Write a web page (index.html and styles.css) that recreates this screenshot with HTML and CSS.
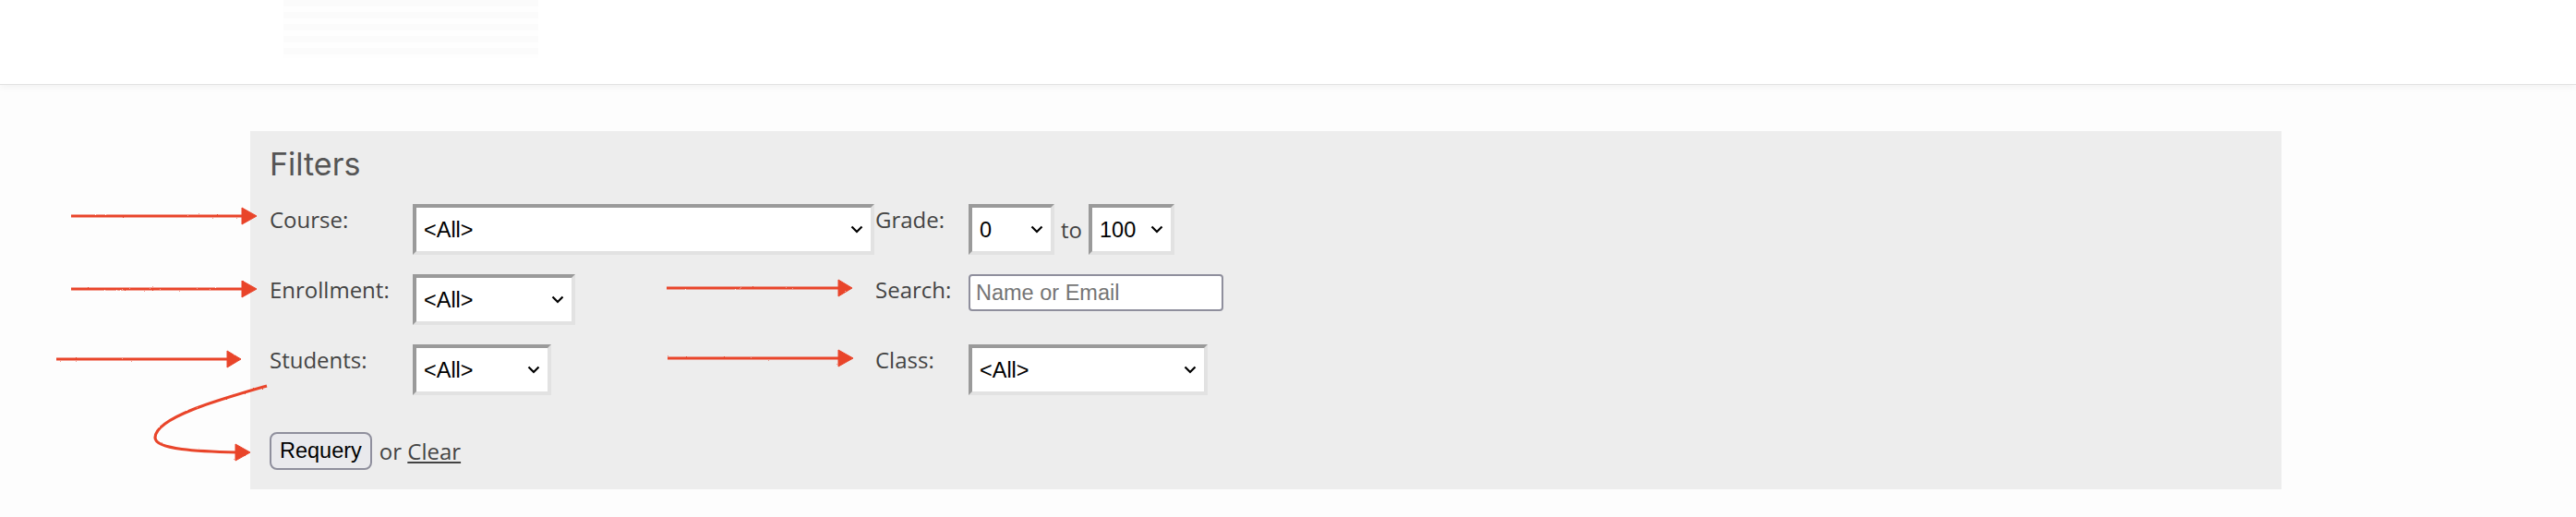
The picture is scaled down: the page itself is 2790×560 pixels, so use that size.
FILE: index.html
```html
<!DOCTYPE html>
<html lang="en">
  <head>
    <meta charset="UTF-8" />
    <meta name="viewport" content="width=device-width, initial-scale=1.0" />
    <title>Gradebook Filters</title>
    <link rel="stylesheet" href="styles.css">
  </head>

  <body>
    <header class="topbar">
      <div class="brand"></div>
    </header>

    <main class="content">
      <section class="filters">
        <h2>Filters</h2>

        <form class="filter-grid" id="filter-form">
          <label for="course">Course:</label>
          <select id="course" class="sel sel-course">
            <option>&lt;All&gt;</option>
          </select>
          <label for="grade-min">Grade:</label>
          <div class="grade-range">
            <select id="grade-min" class="sel sel-grade">
              <option>0</option>
            </select>
            <span>to</span>
            <select id="grade-max" class="sel sel-grade">
              <option>100</option>
            </select>
          </div>

          <label for="enrollment">Enrollment:</label>
          <select id="enrollment" class="sel sel-enroll">
            <option>&lt;All&gt;</option>
          </select>
          <label for="search">Search:</label>
          <input type="text" id="search" class="search" placeholder="Name or Email" />

          <label for="students">Students:</label>
          <select id="students" class="sel sel-students">
            <option>&lt;All&gt;</option>
          </select>
          <label for="class">Class:</label>
          <select id="class" class="sel sel-class">
            <option>&lt;All&gt;</option>
          </select>
        </form>

        <div class="actions">
          <button type="submit" form="filter-form">Requery</button>
          <span>or <a href="#">Clear</a></span>
        </div>
      </section>
    </main>

    <!-- hand-drawn pointers -->
    <svg class="marks" width="2790" height="560" viewBox="0 0 2790 560">
      <defs>
        <filter id="rough">
          <feTurbulence type="fractalNoise" baseFrequency="0.9" numOctaves="2" result="noise" />
          <feDisplacementMap in="SourceGraphic" in2="noise" scale="1.8" />
        </filter>
      </defs>
      <g filter="url(#rough)" stroke="#e9452c" fill="#e9452c">
        <line x1="77" y1="234" x2="264" y2="234" stroke-width="3.2" />
        <polygon points="262,225 278,234 262,243" stroke-width="1" />

        <line x1="77" y1="313" x2="264" y2="313" stroke-width="3.2" />
        <polygon points="262,304 278,313 262,322" stroke-width="1" />

        <line x1="61" y1="389" x2="248" y2="389" stroke-width="3.2" />
        <polygon points="246,380 261,389 246,398" stroke-width="1" />

        <line x1="722" y1="312" x2="910" y2="312" stroke-width="3.2" />
        <polygon points="908,303 923,312 908,321" stroke-width="1" />

        <line x1="723" y1="388" x2="910" y2="388" stroke-width="3.2" />
        <polygon points="908,379 924,388 908,397" stroke-width="1" />

        <path d="M289 418 C 240 432, 168 452, 168 474 C 168 487, 215 489, 258 490" fill="none" stroke-width="3.2" />
        <polygon points="255,481 271,490 255,499" stroke-width="1" />
      </g>
    </svg>
  </body>
</html>
```

FILE: styles.css
```css
body {
  margin: 0;
  background-color: #fdfdfd;
  font-family: "Open Sans", "Noto Sans", sans-serif;
  color: #444;
}

.topbar {
  height: 91px;
  padding-left: 307px;
  background-color: #fff;
  border-bottom: 1px solid #e2e2e2;
  box-shadow: 0 2px 8px rgba(0, 0, 0, 0.05);
}

/* washed-out logo strip */
.brand {
  width: 276px;
  height: 63px;
  background: repeating-linear-gradient(to bottom, #fbfbfb 0 7px, #fefefe 7px 13px);
}

.content {
  padding: 50px 0 0 271px;
}

.filters {
  width: 2200px;
  box-sizing: border-box;
  padding: 16px 21px 21px;
  background-color: #ededed;
}

.filters h2 {
  margin: 0;
  font-family: Inter, "Open Sans", sans-serif;
  font-weight: 400;
  font-size: 34px;
  line-height: 40px;
  color: #555;
}

.filter-grid {
  display: grid;
  grid-template-columns: 155px 501px 101px 1fr;
  row-gap: 21px;
  align-items: start;
  margin-top: 23px;
}

.filter-grid label {
  font-size: 24px;
  line-height: normal;
}

.sel {
  appearance: none;
  -webkit-appearance: none;
  box-sizing: border-box;
  height: 55px;
  padding: 0 30px 0 8px;
  border: 4px solid;
  border-color: #9a9a9a #e2e2e2 #e2e2e2 #9a9a9a;
  border-radius: 0;
  background: #fff url("data:image/svg+xml,<svg xmlns='http://www.w3.org/2000/svg' width='14' height='9' viewBox='0 0 14 9'><path d='M1.5 1.5l5.5 5.5 5.5-5.5' fill='none' stroke='%23000' stroke-width='2.2'/></svg>") no-repeat right 8px center;
  font-family: "Liberation Sans", Arial, sans-serif;
  font-size: 23.5px;
  color: #000;
}

.sel-course {
  width: 500px;
}

.sel-enroll {
  width: 176px;
}

.sel-students {
  width: 150px;
}

.sel-class {
  width: 259px;
}

.sel-grade {
  width: 93px;
}

.grade-range {
  display: flex;
  align-items: center;
  gap: 7px;
  font-size: 24px;
}

.search {
  box-sizing: border-box;
  width: 276px;
  height: 40px;
  padding: 0 6px;
  border: 2px solid #8f8f9d;
  border-radius: 4px;
  background-color: #fff;
  font-family: "Liberation Sans", Arial, sans-serif;
  font-size: 23.5px;
}

.search::placeholder {
  color: #757575;
}

.actions {
  display: flex;
  align-items: center;
  gap: 8px;
  margin-top: 40px;
  font-size: 24px;
}

.actions button {
  height: 41px;
  padding: 0 9px;
  border: 2px solid #8f8f9d;
  border-radius: 8px;
  background-color: #e9e9ed;
  color: #000;
  font-family: "Liberation Sans", Arial, sans-serif;
  font-size: 23.5px;
}

.actions a {
  color: #444;
  text-decoration: underline;
}

.marks {
  position: absolute;
  top: 0;
  left: 0;
  pointer-events: none;
}
```
